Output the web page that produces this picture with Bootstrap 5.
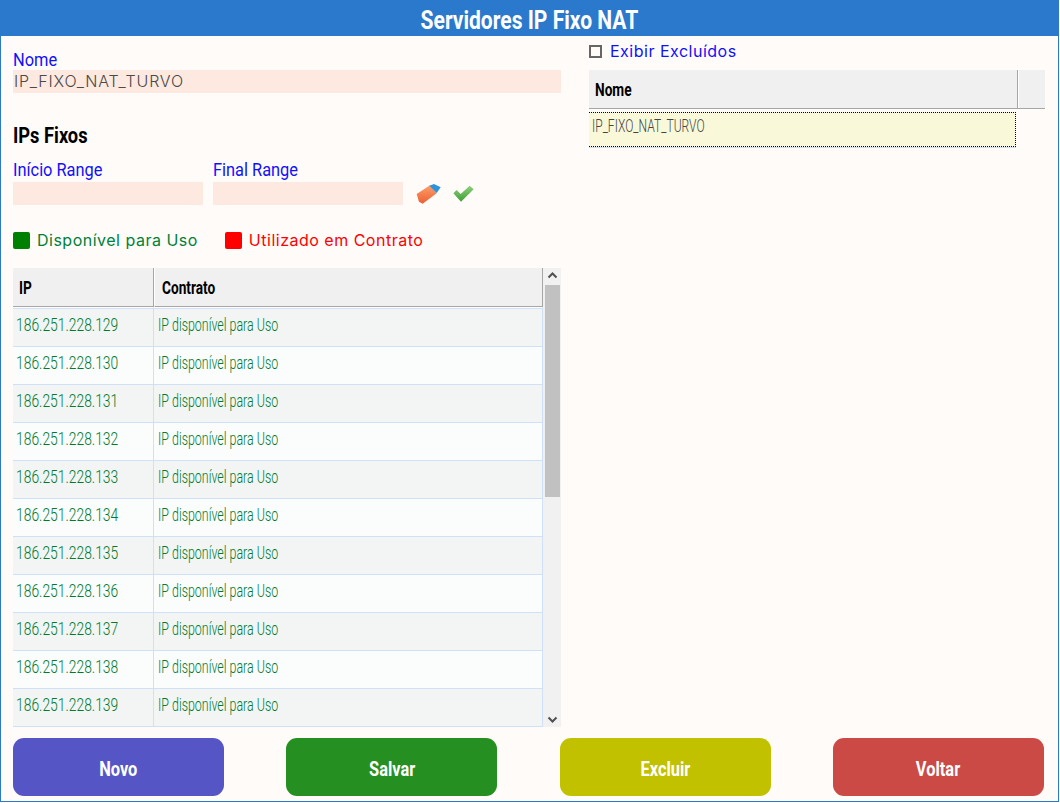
<!DOCTYPE html>
<html lang="pt-BR">
<head>
<meta charset="utf-8">
<title>Servidores IP Fixo NAT</title>
<link href="https://cdn.jsdelivr.net/npm/bootstrap@5.3.0/dist/css/bootstrap.min.css" rel="stylesheet">
<style>
html,body{height:100%;background:#fff;overflow:hidden}
.frame{width:1059px;height:802px;border:solid #2b79cc;border-width:0 1px 1px 1px;background:#fffbf9}
.topbar{height:36px;margin:0 -1px;background:#2b79cc;color:#fff;font:700 26px/40px Roboto,sans-serif;overflow:hidden}
.squeeze{display:inline-block;transform-origin:left center;white-space:nowrap}
.squeeze-c{display:inline-block;transform-origin:center center;white-space:nowrap}
.topbar .squeeze-c{transform:scaleX(.81)}
.workarea{padding:8px 13px 0 12px;gap:28px;height:694px}
.leftcol{width:548px}
.rightcol{width:456px}
.lbl{display:block;height:20px;margin:0;color:#1010ff;font:400 18px/20px Roboto,sans-serif}
.lbl .squeeze{transform:scaleX(.91)}
.field.form-control{height:23px;padding:0 1px 2px;border:0;border-radius:0;background:#fde9df;color:#4a4a4a;font:300 16px/21px Inter,sans-serif;letter-spacing:.8px;box-shadow:none}
.nomebox{padding-top:6px}
.heading-ip{height:22px;margin:32px 0 13px;color:#000;font:700 22px/22px Roboto,sans-serif}
.heading-ip .squeeze{transform:scaleX(.83)}
.rangebox{width:190px}
.rangelabel{margin-bottom:2px}
.ranges{gap:10px}
.toolicons{gap:12px;height:23px;margin-left:3px}
.legend-row{margin-top:27px;height:17px;gap:27px;font:400 16px/17px Inter,sans-serif;letter-spacing:.5px}
.sw{width:17px;height:17px;border-radius:2px;margin-right:7px}
.leg-green{color:#00803a}.leg-red{color:#f00}
.sw-green{background:#008000}.sw-red{background:#f00}
.gridwrap{margin-top:19px;height:459px}
.tablezone{width:530px;overflow:hidden}
.ipgrid.table{table-layout:fixed;width:530px;margin:0;border-collapse:separate;border-spacing:0;--bs-table-bg:transparent}
.ipgrid th{height:39px;padding:0 0 0 6px;background:#f0f0f0;border:0;border-bottom:1px solid #a6a6a6;border-right:1px solid #a6a6a6;color:#000;font:700 18px/38px Roboto,sans-serif;vertical-align:top}
.ipgrid th+th{padding-left:7px;border-left:1px solid #fff}
.ipgrid th .squeeze{transform:translateY(1px) scaleX(.76)}
.ipgrid td{height:38px;padding:0 0 0 3px;border:0;border-bottom:1px solid #d0e0f8;border-right:1px solid #d0e0f8;color:#007a2e;font:300 18px/32px Roboto,sans-serif;vertical-align:top}
.ipgrid td+td{padding-left:4px}
.ipgrid td .squeeze{transform:scaleX(.77)}
.ipgrid td+td .squeeze{transform:scaleX(.69)}
.ipgrid tbody tr:first-child td{height:40px;padding-top:1px;border-top:1px solid #fff;box-shadow:inset 0 1px 0 #d0e0f8}
.ipgrid tbody tr:nth-child(odd) td{background:#f2f5f4}
.ipgrid tbody tr:nth-child(even) td{background:#fbfcfc}
.fakescroll{width:18px;background:#f1f1f1;padding-left:2px;padding-right:1px}
.sb-btn{height:17px;width:15px;flex:none}
.sb-thumb{height:212px;background:#c1c1c1;flex:none}
.sb-fill{flex:1}
.chkline{height:14px;margin:0 0 12px;gap:8px;font:400 16px/14px Inter,sans-serif;letter-spacing:.5px;color:#1010ff}
.chkline .form-check-input{width:13px;height:13px;margin:0;border:2px solid #666;border-radius:0;background-color:#fffbf9;flex:none}
.sidegrid{height:78px}
.side-head{height:39px;background:#f0f0f0;border-bottom:1px solid #a6a6a6}
.side-head .h1col{width:429px;padding-left:6px;border-right:1px solid #a6a6a6;color:#000;font:700 18px/40px Roboto,sans-serif}
.side-head .h2col{flex:1;border-left:1px solid #fff}
.side-head .squeeze{transform:scaleX(.76)}
.side-row{width:427px;height:35px;margin-top:3px;background:#f9f9d9;border:1px dotted #000;border-left:0;box-shadow:0 1px 0 #d0e0f8;color:#444;font:300 18px/26px Roboto,sans-serif;padding-left:3px}
.side-row .squeeze{transform:scaleX(.67)}
.actions{padding:8px 14px 0 12px}
.actions .btn{width:211px;height:58px;border:0;border-radius:11px;color:#fff;font:700 20px/62px Roboto,sans-serif;padding:0}
.actions .btn .squeeze-c{transform:scaleX(.82)}
.btn-novo{background:#5555c5}.btn-salvar{background:#258f22}.btn-excluir{background:#c1c100}.btn-voltar{background:#cb4a45}
</style>
</head>
<body>
<div class="frame d-flex flex-column">
  <div class="topbar text-center"><span class="squeeze-c">Servidores IP Fixo NAT</span></div>
  <div class="workarea d-flex">
    <div class="leftcol d-flex flex-column">
      <div class="nomebox">
        <label class="lbl" for="nome"><span class="squeeze">Nome</span></label>
        <input id="nome" class="field form-control" type="text" value="IP_FIXO_NAT_TURVO">
      </div>
      <div class="heading-ip"><span class="squeeze">IPs Fixos</span></div>
      <div class="ranges d-flex align-items-end">
        <div class="rangebox">
          <label class="lbl rangelabel" for="ini"><span class="squeeze">Início Range</span></label>
          <input id="ini" class="field form-control" type="text">
        </div>
        <div class="rangebox">
          <label class="lbl rangelabel" for="fim"><span class="squeeze">Final Range</span></label>
          <input id="fim" class="field form-control" type="text">
        </div>
        <div class="toolicons d-flex align-items-center">
          <svg width="25" height="20" viewBox="0 0 75 60" aria-label="Limpar">
            <defs><linearGradient id="er" x1="0" y1="0" x2="0" y2="1"><stop offset="0" stop-color="#fda06a"/><stop offset="1" stop-color="#ec5f33"/></linearGradient></defs>
            <path d="M2 30 42 4 62 28 20 59 9 53Z" fill="url(#er)"/>
            <path d="M40 5 54 0 74 10 62 27Z" fill="#2d93dc"/>
          </svg>
          <svg width="21" height="17" viewBox="0 0 63 51" aria-label="Confirmar">
            <defs><linearGradient id="ck" x1="0" y1="0" x2="0" y2="1"><stop offset="0" stop-color="#8fd07f"/><stop offset="1" stop-color="#3f9f35"/></linearGradient></defs>
            <path d="M1 25 11 15 23 27 50 2 62 13 24 50Z" fill="url(#ck)"/>
          </svg>
        </div>
      </div>
      <div class="legend-row d-flex">
        <div class="d-flex leg-green"><span class="sw sw-green"></span><span>Disponível para Uso</span></div>
        <div class="d-flex leg-red"><span class="sw sw-red"></span><span>Utilizado em Contrato</span></div>
      </div>
      <div class="gridwrap d-flex">
        <div class="tablezone">
          <table class="table ipgrid">
            <colgroup><col style="width:141px"><col></colgroup>
            <thead><tr><th><span class="squeeze">IP</span></th><th><span class="squeeze">Contrato</span></th></tr></thead>
            <tbody>
              <tr><td><span class="squeeze">186.251.228.129</span></td><td><span class="squeeze">IP disponível para Uso</span></td></tr>
              <tr><td><span class="squeeze">186.251.228.130</span></td><td><span class="squeeze">IP disponível para Uso</span></td></tr>
              <tr><td><span class="squeeze">186.251.228.131</span></td><td><span class="squeeze">IP disponível para Uso</span></td></tr>
              <tr><td><span class="squeeze">186.251.228.132</span></td><td><span class="squeeze">IP disponível para Uso</span></td></tr>
              <tr><td><span class="squeeze">186.251.228.133</span></td><td><span class="squeeze">IP disponível para Uso</span></td></tr>
              <tr><td><span class="squeeze">186.251.228.134</span></td><td><span class="squeeze">IP disponível para Uso</span></td></tr>
              <tr><td><span class="squeeze">186.251.228.135</span></td><td><span class="squeeze">IP disponível para Uso</span></td></tr>
              <tr><td><span class="squeeze">186.251.228.136</span></td><td><span class="squeeze">IP disponível para Uso</span></td></tr>
              <tr><td><span class="squeeze">186.251.228.137</span></td><td><span class="squeeze">IP disponível para Uso</span></td></tr>
              <tr><td><span class="squeeze">186.251.228.138</span></td><td><span class="squeeze">IP disponível para Uso</span></td></tr>
              <tr><td><span class="squeeze">186.251.228.139</span></td><td><span class="squeeze">IP disponível para Uso</span></td></tr>
            </tbody>
          </table>
        </div>
        <div class="fakescroll d-flex flex-column">
          <svg class="sb-btn" viewBox="0 0 15 17"><path d="M3.5 9.5 7.5 5.5 11.5 9.5" fill="none" stroke="#505050" stroke-width="2"/></svg>
          <div class="sb-thumb"></div>
          <div class="sb-fill"></div>
          <svg class="sb-btn" viewBox="0 0 15 17"><path d="M3.5 7.5 7.5 11.5 11.5 7.5" fill="none" stroke="#505050" stroke-width="2"/></svg>
        </div>
      </div>
    </div>
    <div class="rightcol">
      <div class="chkline d-flex align-items-center">
        <input class="form-check-input" type="checkbox" id="exc">
        <label for="exc">Exibir Excluídos</label>
      </div>
      <div class="sidegrid">
        <div class="side-head d-flex">
          <div class="h1col"><span class="squeeze">Nome</span></div>
          <div class="h2col"></div>
        </div>
        <div class="side-row"><span class="squeeze">IP_FIXO_NAT_TURVO</span></div>
      </div>
    </div>
  </div>
  <div class="actions d-flex justify-content-between">
    <button class="btn btn-novo" type="button"><span class="squeeze-c">Novo</span></button>
    <button class="btn btn-salvar" type="button"><span class="squeeze-c">Salvar</span></button>
    <button class="btn btn-excluir" type="button"><span class="squeeze-c">Excluir</span></button>
    <button class="btn btn-voltar" type="button"><span class="squeeze-c">Voltar</span></button>
  </div>
</div>
<script src="https://cdn.jsdelivr.net/npm/bootstrap@5.3.0/dist/js/bootstrap.bundle.min.js"></script>
</body>
</html>
